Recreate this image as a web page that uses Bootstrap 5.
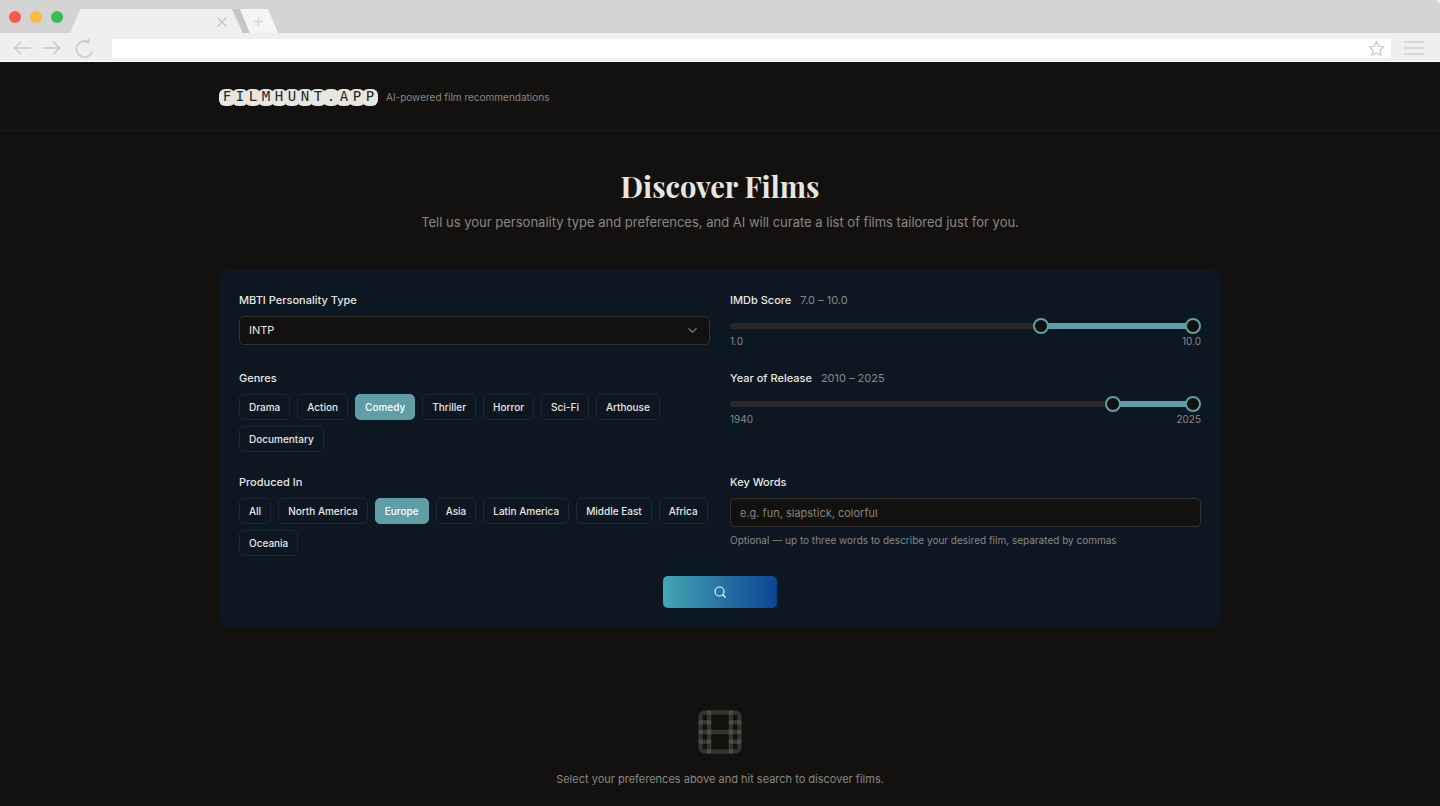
<!DOCTYPE html>
<html lang="en">
<head>
<meta charset="utf-8">
<meta name="viewport" content="width=device-width, initial-scale=1">
<title>filmhunt.app</title>
<link href="https://cdn.jsdelivr.net/npm/bootstrap@5.3.0/dist/css/bootstrap.min.css" rel="stylesheet">
<style>
  :root { --ink: #12110f; --fg: #e8e6e1; --muted: #8a8782; --teal: #5f9ea6; --panel: #0c1722; }
  body { background: var(--ink); color: var(--fg); font-family: Inter, sans-serif; font-size: 11px; line-height: 20px; }

  /* browser frame */
  .frame-tabs { background: #d3d3d3; height: 33px; padding-left: 9px; border-top-right-radius: 6px; }
  .frame { background: #efefef; }
  .dots { gap: 9px; height: 33px; }
  .dots span { width: 12px; height: 12px; border-radius: 50%; }
  .tab-shapes { margin-left: 7px; }
  .frame-bar { height: 29px; border-bottom: 1px solid #fff; padding: 2px 16px 0 13px; }
  .frame-bar button { line-height: 0; }
  .reload { margin-left: 14px; }
  .address { height: 19px; background: #fff; margin: 0 11px 0 18px; padding-right: 6px; }
  .address input { background: transparent; border: 0; outline: 0; height: 19px; min-width: 0; font-size: 12px; }

  .wrap { max-width: 1002px; }
  .site-head { height: 69px; border-bottom: 1px solid #1b1a18; padding-top: 2px; }
  .brand { font-family: "DejaVu Sans Mono", monospace; font-size: 14px; line-height: 14px; color: #2a2927; }
  .brand span { width: 16px; height: 17px; margin-right: -3px; border-radius: 6px; background: var(--fg); text-align: center; }
  .brand span:last-child { margin-right: 0; }
  .tagline { font-size: 10px; color: var(--muted); }

  .hero { padding: 35px 0 38px; }
  .hero h1 { font-family: "Playfair Display", "Liberation Serif", serif; font-weight: 700; font-size: 29px; line-height: 40px; margin-bottom: 6px; color: var(--fg); }
  .hero p { font-size: 13px; color: var(--muted); }

  .panel { background: var(--panel); border-radius: 10px; padding: 20px; }
  .fields { --bs-gutter-x: 20px; --bs-gutter-y: 20px; }
  .field-name { font-size: 11px; line-height: 20px; font-weight: 500; margin-bottom: 6px; color: var(--fg); }
  .field-name output { font-weight: 400; color: var(--muted); margin-left: 9px; padding: 0; }
  .control, .control:focus { background-color: var(--ink); color: var(--fg); border: 1px solid #32312f; border-radius: 5px; height: 29px; font-size: 11px; line-height: 17px; padding: 5px 9px; box-shadow: none; }
  select.control { background-image: url("data:image/svg+xml,%3Csvg xmlns='http://www.w3.org/2000/svg' viewBox='0 0 12 12' fill='none' stroke='%238a8782' stroke-width='1.2' stroke-linecap='round' stroke-linejoin='round'%3E%3Cpath d='M2 4l4 4 4-4'/%3E%3C/svg%3E"); background-size: 11px 11px; background-position: right 11px center; }
  .control::placeholder { color: #858380; opacity: 1; }
  .note { font-size: 10px; line-height: 14px; margin-top: 6px; color: var(--muted); }

  .chips { gap: 6px 7px; }
  .chip { font-size: 10px; line-height: 14px; font-weight: 500; color: var(--fg); padding: 5px 9px; border: 1px solid #1c2731; border-radius: 5px; background: transparent; }
  .chip:hover { border-color: var(--teal); color: var(--fg); }
  .chip[aria-pressed="true"] { background: var(--teal); border-color: var(--teal); color: #fff; }

  /* two range inputs share one track */
  .dual { height: 16px; margin-top: 8px; }
  .dual::before, .dual::after { content: ""; position: absolute; top: 5px; height: 6px; }
  .dual::before { left: 0; right: 0; background: #2a2827; border-radius: 3px; }
  .dual::after { left: calc(8px + (100% - 16px) * var(--from)); right: 8px; background: var(--teal); }
  .dual input { position: absolute; z-index: 1; inset: 0; width: 100%; height: 16px; margin: 0; appearance: none; background: transparent; pointer-events: none; }
  .dual input::-webkit-slider-thumb { appearance: none; pointer-events: auto; width: 16px; height: 16px; border-radius: 50%; background: var(--ink); border: 2px solid var(--teal); }
  .scale { font-size: 10px; line-height: 14px; color: var(--muted); }

  .go { width: 114px; height: 32px; border: 0; border-radius: 5px; background: linear-gradient(90deg, #43a6b4, #0a4594); color: #fff; line-height: 0; margin-top: 20px; }
  .empty { padding-top: 78px; color: var(--muted); }
  .empty p { margin-top: 11px; }
</style>
</head>
<body>
<div class="frame">
  <div class="frame-tabs d-flex">
    <div class="dots d-flex align-items-center">
      <span style="background:#fc5753"></span><span style="background:#fdbc40"></span><span style="background:#3cba54"></span>
    </div>
    <svg class="tab-shapes" width="208" height="33" viewBox="70 0 208 33" fill="none" aria-hidden="true">
      <path d="M70 33 80.500 9H232l11 24z" fill="#efefef"/>
      <path d="M232 9h7.500l10 24H243z" fill="#c6c6c6"/>
      <path d="M240 9h28l10 24h-28z" fill="#f5f5f5"/>
      <path d="M217.500 17.500l9 9m0-9-9 9" stroke="#c8c8c8" stroke-width="1.500"/>
      <path d="M254 21.500h9m-4.500-4.500v9" stroke="#d5d5d5" stroke-width="1.300"/>
    </svg>
  </div>
  <div class="frame-bar d-flex align-items-center">
    <button class="btn p-0 border-0" aria-label="Back"><svg width="18" height="20" fill="none" stroke="#c9c9c9" stroke-width="1.500"><path d="M18 10H1.500M8 3.500 1.500 10 8 16.500"/></svg></button>
    <button class="btn p-0 border-0 ms-2 ps-1" aria-label="Forward"><svg width="18" height="20" fill="none" stroke="#c9c9c9" stroke-width="1.500"><path d="M0 10h16.500M10 3.500l6.500 6.500-6.500 6.500"/></svg></button>
    <button class="btn p-0 border-0 reload" aria-label="Reload"><svg width="19" height="22" viewBox="0 0 19 22" fill="none" stroke="#c9c9c9" stroke-width="1.500"><path d="M14 5A8.200 8.200 0 1 0 17.500 14.500M13.500 1l.5 4.500-4.500-.5"/></svg></button>
    <div class="address flex-grow-1 d-flex align-items-center">
      <input class="flex-grow-1" type="text" aria-label="Address">
      <svg width="17" height="17" viewBox="0 0 17 17" fill="none" stroke="#cacaca" stroke-width="1.300" stroke-linejoin="round"><path d="M8.500 1.500l2.200 4.700 5 .6-3.700 3.500 1 5-4.500-2.500L4 15.300l1-5L1.300 6.800l5-.6z"/></svg>
    </div>
    <button class="btn p-0 border-0" aria-label="Menu"><svg width="22" height="16" stroke="#cfcfcf" stroke-width="1.500"><path d="M2 2h20M2 8h20M2 14h20"/></svg></button>
  </div>
</div>

<header class="site-head d-flex">
  <div class="wrap w-100 mx-auto d-flex align-items-center">
    <div class="brand d-flex"><span>F</span><span>I</span><span>L</span><span>M</span><span>H</span><span>U</span><span>N</span><span>T</span><span>.</span><span>A</span><span>P</span><span>P</span></div>
    <span class="tagline ms-2">AI-powered film recommendations</span>
  </div>
</header>

<main class="wrap mx-auto">
  <div class="hero text-center">
    <h1>Discover Films</h1>
    <p class="mb-0">Tell us your personality type and preferences, and AI will curate a list of films tailored just for you.</p>
  </div>

  <form class="panel" onsubmit="return false">
    <div class="row row-cols-1 row-cols-md-2 fields">
      <div class="col">
        <label class="field-name d-block" for="mbti">MBTI Personality Type</label>
        <select class="form-select control" id="mbti"><option>INTP</option></select>
      </div>
      <div class="col">
        <label class="field-name d-block" for="scoreFrom">IMDb Score<output>7.0 – 10.0</output></label>
        <div class="dual position-relative" style="--from:.6667">
          <input type="range" id="scoreFrom" min="1" max="10" step=".1" value="7">
          <input type="range" aria-label="Highest IMDb score" min="1" max="10" step=".1" value="10">
        </div>
        <div class="scale d-flex justify-content-between"><span>1.0</span><span>10.0</span></div>
      </div>
      <div class="col">
        <div class="field-name" id="genres">Genres</div>
        <div class="chips d-flex flex-wrap" role="group" aria-labelledby="genres">
          <button type="button" class="btn chip">Drama</button>
          <button type="button" class="btn chip">Action</button>
          <button type="button" class="btn chip" aria-pressed="true">Comedy</button>
          <button type="button" class="btn chip">Thriller</button>
          <button type="button" class="btn chip">Horror</button>
          <button type="button" class="btn chip">Sci-Fi</button>
          <button type="button" class="btn chip">Arthouse</button>
          <button type="button" class="btn chip">Documentary</button>
        </div>
      </div>
      <div class="col">
        <label class="field-name d-block" for="yearFrom">Year of Release<output>2010 – 2025</output></label>
        <div class="dual position-relative" style="--from:.8235">
          <input type="range" id="yearFrom" min="1940" max="2025" value="2010">
          <input type="range" aria-label="Latest year of release" min="1940" max="2025" value="2025">
        </div>
        <div class="scale d-flex justify-content-between"><span>1940</span><span>2025</span></div>
      </div>
      <div class="col">
        <div class="field-name" id="regions">Produced In</div>
        <div class="chips d-flex flex-wrap" role="group" aria-labelledby="regions">
          <button type="button" class="btn chip">All</button>
          <button type="button" class="btn chip">North America</button>
          <button type="button" class="btn chip" aria-pressed="true">Europe</button>
          <button type="button" class="btn chip">Asia</button>
          <button type="button" class="btn chip">Latin America</button>
          <button type="button" class="btn chip">Middle East</button>
          <button type="button" class="btn chip">Africa</button>
          <button type="button" class="btn chip">Oceania</button>
        </div>
      </div>
      <div class="col">
        <label class="field-name d-block" for="words">Key Words</label>
        <input class="form-control control" id="words" type="text" placeholder="e.g. fun, slapstick, colorful">
        <div class="note">Optional — up to three words to describe your desired film, separated by commas</div>
      </div>
    </div>
    <div class="text-center">
      <button class="go" type="submit" aria-label="Search"><svg width="12" height="12" viewBox="0 0 24 24" fill="none" stroke="currentColor" stroke-width="2.200" stroke-linecap="round" stroke-linejoin="round"><circle cx="11" cy="11" r="9"/><path d="M22.500 22.500l-5-5"/></svg></button>
    </div>
  </form>

  <div class="empty text-center">
    <svg width="52" height="52" viewBox="0 0 24 24" fill="none" stroke="#8a8782" stroke-opacity=".3" stroke-width="2" stroke-linecap="round" aria-hidden="true">
      <rect x="3" y="3" width="18" height="18" rx="2"/><path d="M7 3v18"/><path d="M17 3v18"/><path d="M3 12h18"/><path d="M3 7.500h4"/><path d="M3 16.500h4"/><path d="M17 7.500h4"/><path d="M17 16.500h4"/>
    </svg>
    <p class="mb-0">Select your preferences above and hit search to discover films.</p>
  </div>
</main>
<script src="https://cdn.jsdelivr.net/npm/bootstrap@5.3.0/dist/js/bootstrap.bundle.min.js"></script>
</body>
</html>
